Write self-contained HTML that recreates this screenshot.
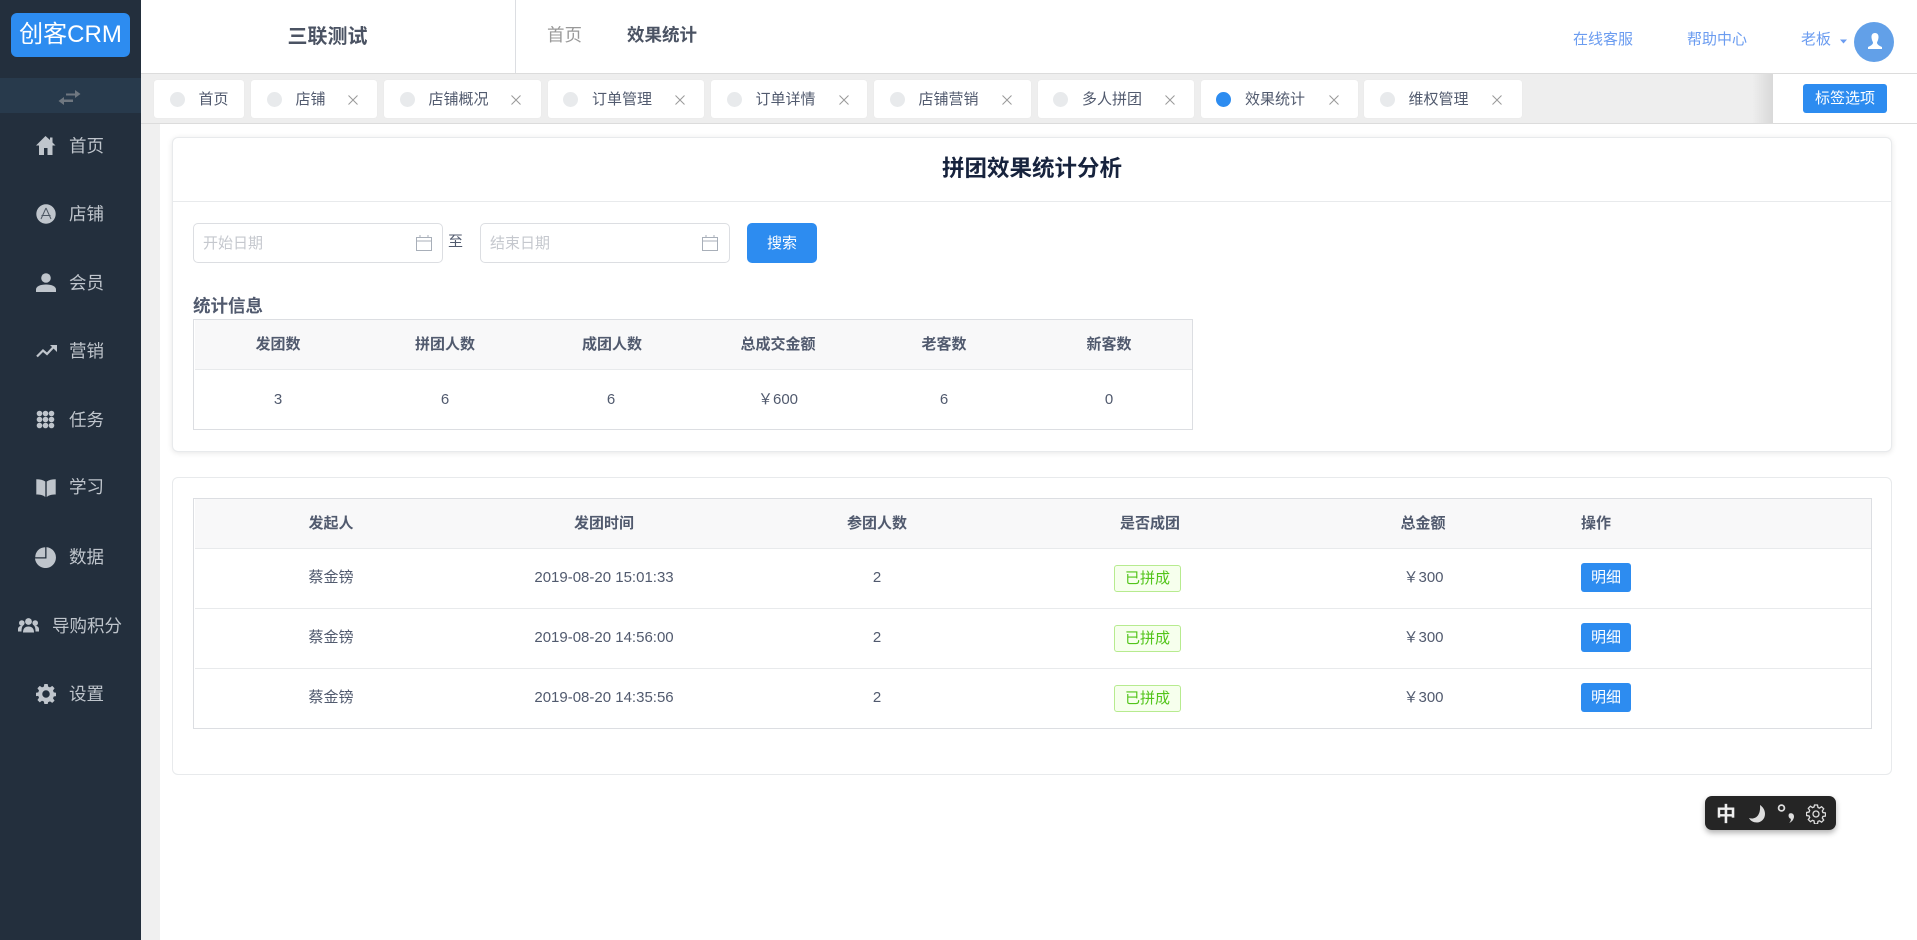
<!DOCTYPE html>
<html lang="zh"><head><meta charset="utf-8"><title>拼团效果统计分析</title>
<style>
*{box-sizing:border-box}
html,body{margin:0;padding:0;width:1917px;height:940px;overflow:hidden;background:#fff;font-family:"Liberation Sans","Noto Sans CJK SC",sans-serif;color:#515a6e;font-size:15px}
.a{position:absolute;white-space:nowrap}
.c{position:absolute;white-space:nowrap;text-align:center;transform:translateX(-50%)}
svg{position:absolute;display:block}
.side{left:0;top:0;width:141px;height:940px;background:#232f3d}
.m{position:absolute;left:69px;color:#bfc5cc;font-size:17.5px;line-height:24px;white-space:nowrap}
.tab{position:absolute;top:80px;height:38px;background:#fff;border-radius:3px;box-shadow:0 0 1px #e0e0e0}
.dot{position:absolute;left:15.5px;top:12px;width:15px;height:15px;border-radius:50%;background:#e8eaec}
.tab span{position:absolute;top:10px;left:44.5px;line-height:20px;font-size:15px;color:#515a6e;white-space:nowrap}
.tab svg{top:15px;width:10px;height:10px}
.card{position:absolute;left:172px;width:1720px;background:#fff;border:1px solid #e8eaec;border-radius:6px}
.tb{position:absolute;background:#fff;border:1px solid #dcdee2}
.th{position:absolute;left:1px;right:0;top:0;height:50px;background:#f8f8f9;border-bottom:1px solid #e8eaec}
.ln{position:absolute;left:1px;right:0;height:1px;background:#e8eaec}
.h{font-weight:700;color:#515a6e;line-height:20px}
.t{line-height:20px;color:#515a6e}
.tag{position:absolute;left:1114px;width:67px;height:27px;background:#f6ffed;border:1px solid #b7eb8f;border-radius:3px;color:#52c41a;text-align:center;line-height:25px;font-size:15px}
.btn{position:absolute;left:1581px;width:50px;height:29px;background:#2d8cf0;border-radius:3px;color:#fff;text-align:center;line-height:29px;font-size:15px}
.link{color:#6b9cf0;font-size:15px;line-height:20px}
</style></head><body>

<div class="a side"></div>
<div class="a" style="left:11px;top:13px;width:119px;height:44px;background:#2d8cf0;border-radius:6px;color:#fff;font-size:24px;line-height:44px;text-align:center">创客CRM</div>
<div class="a" style="left:0;top:78px;width:141px;height:35px;background:#283a4c"></div>
<svg style="left:58px;top:88px" width="23" height="18" viewBox="0 0 23 18"><path d="M8 6h9V2.500L22.500 6.500 17 10.500V8H8zM15 10v2H6V9.500L.5 13.500 6 17.500V14.500h9z" fill="#6f7780" transform="translate(0 -.5)"/></svg>

<svg style="left:36px;top:136px" width="20" height="19" viewBox="0 0 20 19"><path d="M9.500 0L0 9.500h3V19h5v-7h3.500v7H16.500V9.500H19.500L16.500 6.500V1.500H14V4z" fill="#bfc5cc"/></svg>
<div class="m" style="top:134px">首页</div>
<svg style="left:36px;top:204px" width="20" height="20" viewBox="0 0 20 20"><circle cx="10" cy="10" r="9.700" fill="#bfc5cc"/><path d="M10 4L5 15M10 4l5 11M5.500 11.500h9" stroke="#4d5763" stroke-width="1" fill="none"/></svg>
<div class="m" style="top:202px">店铺</div>
<svg style="left:36px;top:273px" width="20" height="19" viewBox="0 0 20 19"><circle cx="10" cy="5" r="4.800" fill="#bfc5cc"/><path d="M0 19v-2.500c0-3 4-5 10-5s10 2 10 5V19z" fill="#bfc5cc"/></svg>
<div class="m" style="top:271px">会员</div>
<svg style="left:36px;top:344px" width="21" height="14" viewBox="0 0 21 14"><path d="M1 12.500l6-6 4 3.500 7-7.500" stroke="#bfc5cc" stroke-width="2.200" fill="none"/><path d="M14 1h7v7z" fill="#bfc5cc"/></svg>
<div class="m" style="top:339px">营销</div>
<svg style="left:36px;top:410px" width="19" height="19" viewBox="0 0 19 19" fill="#bfc5cc"><circle cx="3.500" cy="3.500" r="2.800"/><circle cx="9.500" cy="3.500" r="2.800"/><circle cx="15.500" cy="3.500" r="2.800"/><circle cx="3.500" cy="9.500" r="2.800"/><circle cx="9.500" cy="9.500" r="2.800"/><circle cx="15.500" cy="9.500" r="2.800"/><circle cx="3.500" cy="15.500" r="2.800"/><circle cx="9.500" cy="15.500" r="2.800"/><circle cx="15.500" cy="15.500" r="2.800"/></svg>
<div class="m" style="top:408px">任务</div>
<svg style="left:36px;top:479px" width="20" height="18" viewBox="0 0 20 18" fill="#bfc5cc"><path d="M9.300 2.500C7 .8 4 .2 .3 .2V15.500c3.700 0 6.800.6 9 2.500zM10.700 2.500c2.300-1.700 5.300-2.300 9-2.300V15.500c-3.700 0-6.800.6-9 2.500z"/></svg>
<div class="m" style="top:475px">学习</div>
<svg style="left:35px;top:547px" width="21" height="21" viewBox="0 0 21 21"><path d="M11.500 .1A10.500 10.500 0 1 1 0 11.500H11.500z" fill="#bfc5cc"/><path d="M10.200 .2V10.200H.2A10 10 0 0 1 10.200 .2z" fill="#bfc5cc"/></svg>
<div class="m" style="top:545px">数据</div>
<svg style="left:18px;top:618px" width="21" height="15" viewBox="0 0 21 15" fill="#bfc5cc"><circle cx="10.500" cy="3.500" r="3.400"/><path d="M5 14.500c0-4 2-6 5.500-6s5.500 2 5.500 6z"/><circle cx="3.800" cy="5" r="2.800"/><circle cx="17.200" cy="5" r="2.800"/><path d="M0 13.500v-2.500c0-2 2-3.500 5-3.500-1 1-1.500 3-1.500 6zM21 13.500v-2.500c0-2-2-3.500-5-3.500 1 1 1.500 3 1.500 6z"/></svg>
<div class="m" style="left:52px;top:614px">导购积分</div>
<svg style="left:36px;top:684px" width="20" height="20" viewBox="0 0 24 24"><path fill-rule="evenodd" fill="#bfc5cc" d="M10 0h4l.6 3.200 2.200.9L19.500 2.300 22.300 5.100 20.400 7.800l.9 2.200L24 10.500v4l-2.700.5-.9 2.200 1.900 2.700-2.800 2.800-2.700-1.900-2.200.9L14 24h-4l-.6-3-2.200-.9-2.700 1.900-2.800-2.800 1.900-2.700-.9-2.200L0 14.500v-4l2.700-.5.9-2.200L1.700 5.100 4.500 2.300l2.700 1.800 2.200-.9zM12 7.500a4.500 4.500 0 1 0 0 9 4.500 4.500 0 0 0 0-9z"/></svg>
<div class="m" style="top:682px">设置</div>

<div class="a" style="left:515px;top:0;width:1px;height:73px;background:#dcdee2"></div>
<div class="a" style="left:141px;top:73px;width:1776px;height:1px;background:#dcdcdc"></div>
<div class="c" style="left:327.500px;top:24px;font-size:20px;line-height:26px;font-weight:700;color:#4b5363">三联测试</div>
<div class="a" style="left:547px;top:23px;font-size:17.500px;line-height:24px;color:#999">首页</div>
<div class="a" style="left:627px;top:23px;font-size:17.500px;line-height:24px;font-weight:700;color:#4b5363">效果统计</div>
<div class="a link" style="left:1573px;top:30px">在线客服</div>
<div class="a link" style="left:1687px;top:30px">帮助中心</div>
<div class="a link" style="left:1801px;top:30px">老板</div>
<svg style="left:1840px;top:39px" width="7" height="5" viewBox="0 0 7 5"><path d="M0 .5h7L3.500 4.500z" fill="#6b9cf0"/></svg>
<div class="a" style="left:1854px;top:22px;width:40px;height:40px;border-radius:50%;background:#62a0e8"></div>
<svg style="left:1867px;top:33px" width="16" height="16" viewBox="0 0 16 16"><path d="M8 0c-2.700 0-3.700 2-3.500 4.500C4.700 7 5.700 8.500 6 9.500 6 11.500 4 12.500 1 14v2h14v-2c-3-1.500-5-2.500-5-4.500.3-1 1.300-2.500 1.500-5C11.700 2 10.700 0 8 0z" fill="#fff"/></svg>

<div class="a" style="left:141px;top:74px;width:1776px;height:49px;background:#eee"></div>
<div class="a" style="left:141px;top:123px;width:1776px;height:1px;background:#dcdcdc"></div>
<div class="a" style="left:1752px;top:74px;width:21px;height:49px;background:linear-gradient(90deg,rgba(0,0,0,0),rgba(0,0,0,.09))"></div>
<div class="a" style="left:1773px;top:74px;width:144px;height:49px;background:#fff"></div>
<div class="a" style="left:1803px;top:84px;width:84px;height:29px;background:#2d8cf0;border-radius:3px;color:#fff;text-align:center;line-height:30px;font-size:15px">标签选项</div>

<div class="tab" style="left:154px;width:90px"><i class="dot"></i><span>首页</span></div>
<div class="tab" style="left:251px;width:126px"><i class="dot"></i><span>店铺</span><svg style="left:97px" viewBox="0 0 10 10"><path d="M.5 .5l9 9M9.500 .5l-9 9" stroke="#999" fill="none"/></svg></div>
<div class="tab" style="left:384px;width:157px"><i class="dot"></i><span>店铺概况</span><svg style="left:127px" viewBox="0 0 10 10"><path d="M.5 .5l9 9M9.500 .5l-9 9" stroke="#999" fill="none"/></svg></div>
<div class="tab" style="left:547.500px;width:156.500px"><i class="dot"></i><span>订单管理</span><svg style="left:127.500px" viewBox="0 0 10 10"><path d="M.5 .5l9 9M9.500 .5l-9 9" stroke="#999" fill="none"/></svg></div>
<div class="tab" style="left:711px;width:156px"><i class="dot"></i><span>订单详情</span><svg style="left:128px" viewBox="0 0 10 10"><path d="M.5 .5l9 9M9.500 .5l-9 9" stroke="#999" fill="none"/></svg></div>
<div class="tab" style="left:874px;width:157px"><i class="dot"></i><span>店铺营销</span><svg style="left:128px" viewBox="0 0 10 10"><path d="M.5 .5l9 9M9.500 .5l-9 9" stroke="#999" fill="none"/></svg></div>
<div class="tab" style="left:1037.500px;width:156.500px"><i class="dot"></i><span>多人拼团</span><svg style="left:127.500px" viewBox="0 0 10 10"><path d="M.5 .5l9 9M9.500 .5l-9 9" stroke="#999" fill="none"/></svg></div>
<div class="tab" style="left:1200.500px;width:157px"><i class="dot" style="background:#2d8cf0"></i><span>效果统计</span><svg style="left:128.500px" viewBox="0 0 10 10"><path d="M.5 .5l9 9M9.500 .5l-9 9" stroke="#999" fill="none"/></svg></div>
<div class="tab" style="left:1364px;width:158px"><i class="dot"></i><span>维权管理</span><svg style="left:128px" viewBox="0 0 10 10"><path d="M.5 .5l9 9M9.500 .5l-9 9" stroke="#999" fill="none"/></svg></div>

<div class="a" style="left:141px;top:124px;width:19px;height:816px;background:#f0f0f0"></div>

<div class="card" style="top:137px;height:315px;box-shadow:0 1px 6px rgba(0,0,0,.1)"></div>
<div class="a" style="left:173px;top:201px;width:1718px;height:1px;background:#e8eaec"></div>
<div class="c" style="left:1032px;top:153px;font-size:22.500px;line-height:32px;font-weight:700;color:#17233d">拼团效果统计分析</div>

<div class="a" style="left:193px;top:223px;width:250px;height:40px;border:1px solid #dcdee2;border-radius:5px;background:#fff"></div>
<div class="a" style="left:203px;top:234px;font-size:15px;line-height:20px;color:#c5c8ce">开始日期</div>
<svg style="left:416px;top:234px" width="16" height="17" viewBox="0 0 16 17"><path d="M.5 3.500h15v13H.5zM.5 7h15M4 1v3M12 1v3" stroke="#a8afb9" fill="none"/></svg>
<div class="a" style="left:448px;top:232px;font-size:15px;line-height:20px;color:#515a6e">至</div>
<div class="a" style="left:480px;top:223px;width:250px;height:40px;border:1px solid #dcdee2;border-radius:5px;background:#fff"></div>
<div class="a" style="left:490px;top:234px;font-size:15px;line-height:20px;color:#c5c8ce">结束日期</div>
<svg style="left:702px;top:234px" width="16" height="17" viewBox="0 0 16 17"><path d="M.5 3.500h15v13H.5zM.5 7h15M4 1v3M12 1v3" stroke="#a8afb9" fill="none"/></svg>
<div class="a" style="left:747px;top:223px;width:70px;height:40px;background:#2d8cf0;border-radius:5px;color:#fff;text-align:center;line-height:41px;font-size:15px">搜索</div>

<div class="a" style="left:193px;top:294px;font-size:17.500px;line-height:24px;font-weight:700;color:#515a6e">统计信息</div>
<div class="tb" style="left:193px;top:319px;width:1000px;height:111px"><div class="th"></div></div>
<div class="c h" style="left:278px;top:335px">发团数</div>
<div class="c h" style="left:445px;top:335px">拼团人数</div>
<div class="c h" style="left:612px;top:335px">成团人数</div>
<div class="c h" style="left:778px;top:335px">总成交金额</div>
<div class="c h" style="left:944px;top:335px">老客数</div>
<div class="c h" style="left:1109px;top:335px">新客数</div>
<div class="c t" style="left:278px;top:390px">3</div>
<div class="c t" style="left:445px;top:390px">6</div>
<div class="c t" style="left:611px;top:390px">6</div>
<div class="c t" style="left:778px;top:390px">￥600</div>
<div class="c t" style="left:944px;top:390px">6</div>
<div class="c t" style="left:1109px;top:390px">0</div>

<div class="card" style="top:477px;height:298px"></div>
<div class="tb" style="left:193px;top:498px;width:1679px;height:231px"><div class="th"></div><div class="ln" style="top:109px"></div><div class="ln" style="top:169px"></div></div>
<div class="c h" style="left:331px;top:514px">发起人</div>
<div class="c h" style="left:604px;top:514px">发团时间</div>
<div class="c h" style="left:877px;top:514px">参团人数</div>
<div class="c h" style="left:1150px;top:514px">是否成团</div>
<div class="c h" style="left:1423px;top:514px">总金额</div>
<div class="a h" style="left:1581px;top:514px">操作</div>

<div class="c t" style="left:331px;top:568px">蔡金镑</div>
<div class="c t" style="left:604px;top:568px">2019-08-20 15:01:33</div>
<div class="c t" style="left:877px;top:568px">2</div>
<div class="tag" style="top:565px">已拼成</div>
<div class="c t" style="left:1423.500px;top:568px">￥300</div>
<div class="btn" style="top:563px">明细</div>

<div class="c t" style="left:331px;top:628px">蔡金镑</div>
<div class="c t" style="left:604px;top:628px">2019-08-20 14:56:00</div>
<div class="c t" style="left:877px;top:628px">2</div>
<div class="tag" style="top:625px">已拼成</div>
<div class="c t" style="left:1423.500px;top:628px">￥300</div>
<div class="btn" style="top:623px">明细</div>

<div class="c t" style="left:331px;top:688px">蔡金镑</div>
<div class="c t" style="left:604px;top:688px">2019-08-20 14:35:56</div>
<div class="c t" style="left:877px;top:688px">2</div>
<div class="tag" style="top:685px">已拼成</div>
<div class="c t" style="left:1423.500px;top:688px">￥300</div>
<div class="btn" style="top:683px">明细</div>

<div class="a" style="left:1705px;top:796px;width:131px;height:34px;background:#252525;border-radius:7px;box-shadow:0 3px 6px rgba(0,0,0,.3)"></div>
<div class="a" style="left:1716px;top:802px;font-size:20px;line-height:26px;font-weight:700;color:#eee">中</div>
<svg style="left:1748px;top:805px" width="19" height="18" viewBox="0 0 19 18"><path d="M12 0c3 2 5 5 5 9 0 5-4 8.500-8 8.500-3.500 0-6.500-1.500-8-4.500 6 2 12-2 11-13z" fill="#ddd"/></svg>
<svg style="left:1777px;top:803px" width="18" height="22" viewBox="0 0 18 22"><circle cx="4.500" cy="5" r="2.900" stroke="#ddd" stroke-width="1.800" fill="none"/><path d="M12.500 10.500c2.500-.8 4.500.5 4.500 3 0 2.500-2 5.500-4.800 6.500 1.400-1.700 1.900-3 1.600-4.300-2.300-.3-3-4-1.300-5.200z" fill="#ddd"/></svg>
<svg style="left:1806px;top:804px" width="20" height="20" viewBox="0 0 20 20"><path d="M8.500 1h3l.5 2.500 1.500.6 2.100-1.400 2.100 2.100-1.400 2.100.6 1.600 2.600.5v3l-2.600.5-.6 1.500 1.400 2.100-2.100 2.100-2.100-1.400-1.500.6-.5 2.500h-3L8 16.900l-1.500-.6-2.100 1.400-2.100-2.100 1.400-2.100-.6-1.500L.5 11.500v-3L3.100 8l.6-1.600L2.300 4.300 4.400 2.200 6.500 3.600 8 3z" stroke="#ddd" stroke-width="1.300" fill="none"/><circle cx="10" cy="10" r="3" stroke="#ddd" stroke-width="1.300" fill="none"/></svg>
</body></html>
